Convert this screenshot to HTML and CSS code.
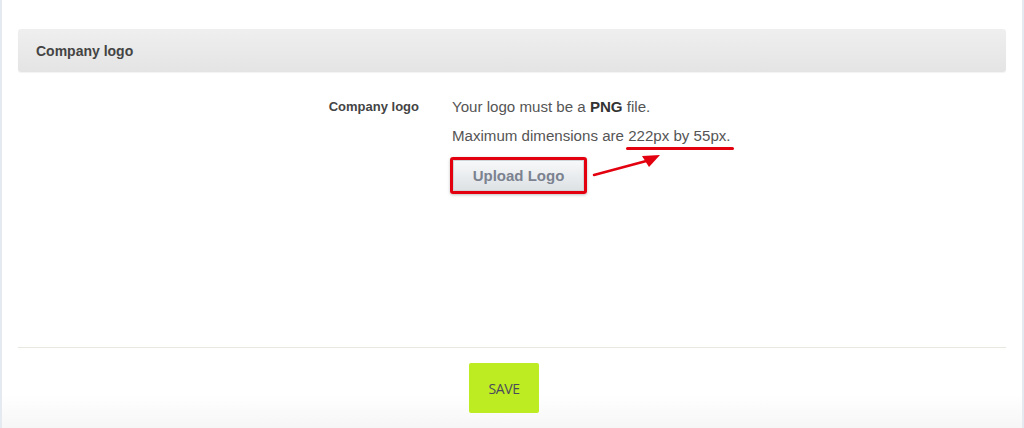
FILE: index.html
```html
<!DOCTYPE html>
<html lang="en">
<head>
    <meta charset="UTF-8">
    <meta name="viewport" content="width=device-width, initial-scale=1.0">
    <title>Company logo</title>
    <link rel="stylesheet" href="styles.css">
</head>
<body>
    <div class="page">
        <div class="section-head">Company logo</div>
        <div class="form-row">
            <div class="form-label">Company logo</div>
            <div class="form-field">
                <p class="hint">Your logo must be a <b>PNG</b> file.</p>
                <p class="hint">Maximum dimensions are <span class="marked">222px by 55px.</span></p>
                <div class="highlight">
                    <button class="upload-button">Upload Logo</button>
                </div>
                <svg class="arrow" width="80" height="30" viewBox="0 0 80 30">
                    <line x1="2" y1="24" x2="58" y2="9" stroke="#e3000f" stroke-width="2.5" stroke-linecap="round"/>
                    <polygon points="68,4 50,5 57,16" fill="#e3000f"/>
                </svg>
            </div>
        </div>
        <div class="form-actions">
            <button class="save-button">SAVE</button>
        </div>
    </div>
</body>
</html>
```

FILE: styles.css
```css
body {
    margin: 0;
    font-family: "Liberation Sans", Arial, sans-serif;
    color: #555;
    background-color: #fff;
}
.page {
    height: 428px;
    box-sizing: border-box;
    padding: 29px 16px 0;
    border-left: 2px solid #e4eaf0;
    border-right: 2px solid #e4eaf0;
    background: linear-gradient(to bottom, #fff 395px, #f6f6f6 428px);
}
.section-head {
    height: 43px;
    display: flex;
    align-items: center;
    padding-left: 18px;
    border-radius: 3px;
    background: linear-gradient(to bottom, #efefef, #e4e4e4);
    box-shadow: 0 1px 1px rgba(0,0,0,0.05);
    font-size: 14px;
    font-weight: bold;
    color: #444;
}
.form-row {
    display: grid;
    grid-template-columns: 401px 1fr;
    column-gap: 33px;
    padding-top: 26px;
    height: 249px;
    border-bottom: 1px solid #e8e8e0;
}
.form-label {
    text-align: right;
    font-size: 13px;
    font-weight: bold;
    color: #444;
    padding-top: 1px;
}
.form-field {
    position: relative;
}
.hint {
    margin: 0 0 12px;
    font-size: 15.1px;
    line-height: 17px;
    color: #555;
}
.hint b {
    color: #333;
}
.marked {
    position: relative;
}
.marked::after {
    content: "";
    position: absolute;
    left: -2px;
    right: -3px;
    bottom: -6px;
    height: 3px;
    border-radius: 2px;
    background-color: #e3000f;
}
.highlight {
    display: inline-block;
    margin-top: 1px;
    margin-left: -2px;
    border: 3px solid #e3000f;
    border-radius: 3px;
    box-shadow: 0 1px 3px rgba(0,0,0,0.25);
}
.upload-button {
    display: block;
    width: 131px;
    height: 31px;
    border: 1px solid #cfd4d8;
    background: linear-gradient(to bottom, #f7f8f9, #dde2e5);
    font-family: "Liberation Sans", Arial, sans-serif;
    font-size: 15px;
    font-weight: bold;
    color: #7b8290;
    cursor: pointer;
}
.arrow {
    position: absolute;
    left: 140px;
    top: 53px;
}
.form-actions {
    display: flex;
    justify-content: center;
    padding-top: 15px;
}
.save-button {
    width: 70px;
    height: 50px;
    margin-right: 16px;
    border: none;
    border-radius: 2px;
    background-color: #bdec22;
    font-family: "Open Sans", sans-serif;
    font-size: 14px;
    letter-spacing: -0.4px;
    color: #4b4b5c;
    cursor: pointer;
}
```
